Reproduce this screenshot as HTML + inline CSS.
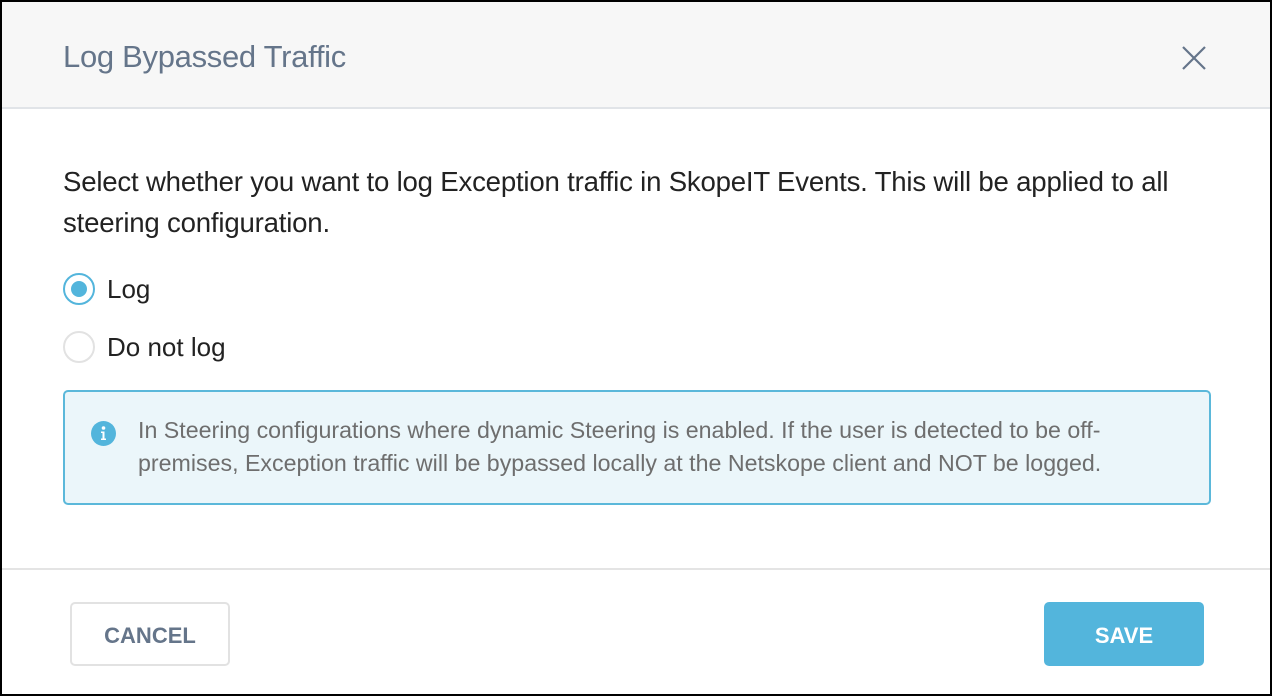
<!DOCTYPE html>
<html><head><style>
*{margin:0;padding:0;box-sizing:border-box}
body{width:1272px;height:696px;background:#000;font-family:"Liberation Sans",sans-serif;overflow:hidden}
.m{position:absolute;left:2px;top:2px;width:1268px;height:692px;background:#fff}
.h{position:absolute;left:0;top:0;width:1268px;height:107px;background:#f7f7f7;border-bottom:2px solid #e1e4e8}
.t{position:absolute;left:61px;top:37px;font-size:31px;color:#65758a;letter-spacing:-0.3px}
.x{position:absolute;left:1178px;top:42px}
.p{position:absolute;left:61px;top:159px;font-size:27.6px;line-height:41px;color:#222;white-space:nowrap;letter-spacing:-0.2px}
.r{position:absolute;left:61px;font-size:26px;color:#222}
.rc{position:absolute;left:0;top:0;width:32px;height:32px;border-radius:50%}
.info{position:absolute;left:61px;top:388px;width:1148px;height:115px;background:#ebf6fa;border:2px solid #5bb8da;border-radius:5px}
.it{position:absolute;left:73px;top:22px;font-size:23.2px;line-height:33px;color:#6e6e6e;white-space:nowrap}
.f{position:absolute;left:0;top:566px;width:1268px;height:2px;background:#e4e4e4}
.b{position:absolute;top:600px;height:64px;padding-top:4px;border-radius:5px;font-weight:bold;font-size:22px;display:flex;align-items:center;justify-content:center}
</style></head><body>
<div class="m">
<div class="h"><div class="t">Log Bypassed Traffic</div>
<svg class="x" width="28" height="28" viewBox="0 0 28 28"><path d="M3 3L25 25M25 3L3 25" stroke="#65758a" stroke-width="2.2"/></svg></div>
<div class="p">Select whether you want to log Exception traffic in SkopeIT Events. This will be applied to all<br>steering configuration.</div>
<div class="r" style="top:271px"><div class="rc" style="border:2px solid #53b5dc"><div style="position:absolute;left:6px;top:6px;width:16px;height:16px;border-radius:50%;background:#53b5dc"></div></div><span style="position:absolute;left:44px;top:1px">Log</span></div>
<div class="r" style="top:329px"><div class="rc" style="border:2px solid #e2e2e2"></div><span style="position:absolute;left:44px;top:1px;white-space:nowrap">Do not log</span></div>
<div class="info">
<svg style="position:absolute;left:26px;top:29px" width="25" height="25" viewBox="0 0 25 25"><circle cx="12.5" cy="12.5" r="12.5" fill="#53b5dc"/><circle cx="12.5" cy="7" r="1.8" fill="#fff"/><path d="M10 10.5h3.5v7h1.5v1.5h-5v-1.5h1.5v-5.5h-1.5z" fill="#fff"/></svg>
<div class="it">In Steering configurations where dynamic Steering is enabled. If the user is detected to be off-<br>premises, Exception traffic will be bypassed locally at the Netskope client and NOT be logged.</div></div>
<div class="f"></div>
<div class="b" style="left:68px;width:160px;border:2px solid #e2e2e2;color:#65758a">CANCEL</div>
<div class="b" style="left:1042px;width:160px;background:#53b5dc;color:#fff">SAVE</div>
</div>
</body></html>
